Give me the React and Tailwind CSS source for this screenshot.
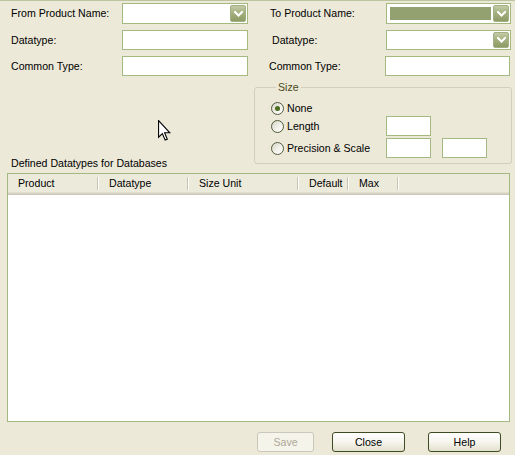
import React from "react";

function DropBtn() {
  return (
    <div className="ml-auto w-[16px] h-full rounded-[2px] border border-[#a3b083] bg-gradient-to-b from-[#c2cba6] via-[#a3ae7d] to-[#8d9b65] flex items-center justify-center">
      <svg width="9" height="6" viewBox="0 0 9 6">
        <path d="M1 1 L4.5 4.5 L8 1" fill="none" stroke="white" strokeWidth="2" strokeLinecap="square" />
      </svg>
    </div>
  );
}

function Combo({ selected }) {
  return (
    <div className="h-full border border-[#a4b97f] bg-white flex p-[1px]">
      {selected ? <div className="flex-1 my-[2px] ml-[2px] mr-[2px] bg-[#93a070]" /> : <div className="flex-1" />}
      <DropBtn />
    </div>
  );
}

function TextBox({ className = "" }) {
  return <div className={"border border-[#a4b97f] bg-white " + className} />;
}

function Radio({ checked, label }) {
  return (
    <div className="flex items-center w-[115px]">
      <div className="w-[13px] h-[13px] rounded-full border border-[#4f5c3a] bg-gradient-to-br from-[#d6d4c4] via-[#f0efe8] to-white flex items-center justify-center">
        {checked && <div className="w-[5px] h-[5px] rounded-full bg-[#4a6d1e]" />}
      </div>
      <span className="ml-[3px]">{label}</span>
    </div>
  );
}

function HeaderCell({ w, label }) {
  return (
    <div className={"flex items-center h-full " + w}>
      <span className="pl-[10px] flex-1">{label}</span>
      <div className="flex self-center h-[13px]">
        <div className="w-[1px] h-full bg-[#c7c5b2]" />
        <div className="w-[1px] h-full bg-white" />
      </div>
    </div>
  );
}

export default function App() {
  return (
    <div className="relative w-[515px] h-[455px] overflow-hidden bg-[#ece9d8] border-t border-[#bcc5a0] text-[10.6px] leading-[13px] text-black font-['Liberation_Sans',Arial,sans-serif] flex flex-col">
      {/* top form rows */}
      <div className="flex pl-[11px] mt-[2px] h-[21px]">
        <div className="w-[111px] flex items-center">From Product Name:</div>
        <div className="w-[126px]"><Combo /></div>
        <div className="w-[22px]" />
        <div className="w-[116px] flex items-center">To Product Name:</div>
        <div className="w-[125px]"><Combo selected /></div>
      </div>
      <div className="flex pl-[11px] mt-[6px] h-[20px]">
        <div className="w-[111px] flex items-center">Datatype:</div>
        <div className="w-[126px]"><TextBox className="h-full" /></div>
        <div className="w-[22px]" />
        <div className="w-[116px] flex items-center pl-[2px]">Datatype:</div>
        <div className="w-[125px]"><Combo /></div>
      </div>
      <div className="flex pl-[11px] mt-[6px] h-[20px]">
        <div className="w-[111px] flex items-center">Common Type:</div>
        <div className="w-[126px]"><TextBox className="h-full" /></div>
        <div className="w-[22px]" />
        <div className="w-[116px] flex items-center -ml-[1px]">Common Type:</div>
        <div className="w-[125px]"><TextBox className="h-full" /></div>
      </div>

      {/* middle: label + size group */}
      <div className="flex h-[97px]">
        <div className="flex-1 flex items-end pl-[11px] pb-[3px]">Defined Datatypes for Databases</div>
        <fieldset className="mt-[5px] mr-[3px] w-[258px] h-[83px] border border-[#d0d0bf] rounded-[3px] pl-[16px]">
          <legend className="ml-[5px] px-[2px] text-[#4a4a1c] leading-[13px]">Size</legend>
          <div className="flex flex-col">
            <div className="flex items-center h-[15px] mt-[7px]">
              <Radio checked label="None" />
            </div>
            <div className="flex items-center h-[20px]">
              <Radio label="Length" />
              <TextBox className="w-[45px] h-full" />
            </div>
            <div className="flex items-center h-[20px] mt-[2px]">
              <Radio label="Precision & Scale" />
              <TextBox className="w-[45px] h-full" />
              <TextBox className="w-[45px] h-full ml-[11px]" />
            </div>
          </div>
        </fieldset>
      </div>

      {/* list view */}
      <div className="ml-[7px] w-[503px] h-[249px] border border-[#a4b97f] bg-white flex flex-col">
        <div className="flex h-[18px] bg-[#ebeadb]">
          <HeaderCell w="w-[91px]" label="Product" />
          <HeaderCell w="w-[90px]" label="Datatype" />
          <HeaderCell w="w-[110px]" label="Size Unit" />
          <HeaderCell w="w-[50px]" label="Default" />
          <HeaderCell w="w-[50px]" label="Max" />
        </div>
        <div className="h-[1px] bg-[#e2decd]" />
        <div className="h-[1px] bg-[#d6d2c2]" />
        <div className="h-[1px] bg-[#cbc7b8]" />
        <div className="flex-1 bg-white" />
      </div>

      {/* buttons */}
      <div className="flex justify-end pr-[14px] mt-[10px]">
        <div className="w-[57px] h-[20px] mr-[18px] rounded-[3px] border border-[#cac8bb] bg-[#f5f4ea] text-[#aca899] flex items-center justify-center">Save</div>
        <div className="w-[73px] h-[20px] mr-[23px] rounded-[3px] border border-[#3d4b23] bg-gradient-to-b from-white via-[#f6f5ee] to-[#e3e0cd] flex items-center justify-center">Close</div>
        <div className="w-[73px] h-[20px] rounded-[3px] border border-[#3d4b23] bg-gradient-to-b from-white via-[#f6f5ee] to-[#e3e0cd] flex items-center justify-center">Help</div>
      </div>

      {/* mouse cursor overlay */}
      <svg className="absolute left-[158px] top-[119px]" width="13" height="21" viewBox="0 0 12 19.5">
        <path d="M0.5 0.5 L0.5 16 L4 12.6 L6.6 18.6 L8.6 17.8 L6.1 11.9 L11 11.9 Z" fill="white" stroke="black" strokeWidth="1" strokeLinejoin="miter" />
      </svg>
    </div>
  );
}
